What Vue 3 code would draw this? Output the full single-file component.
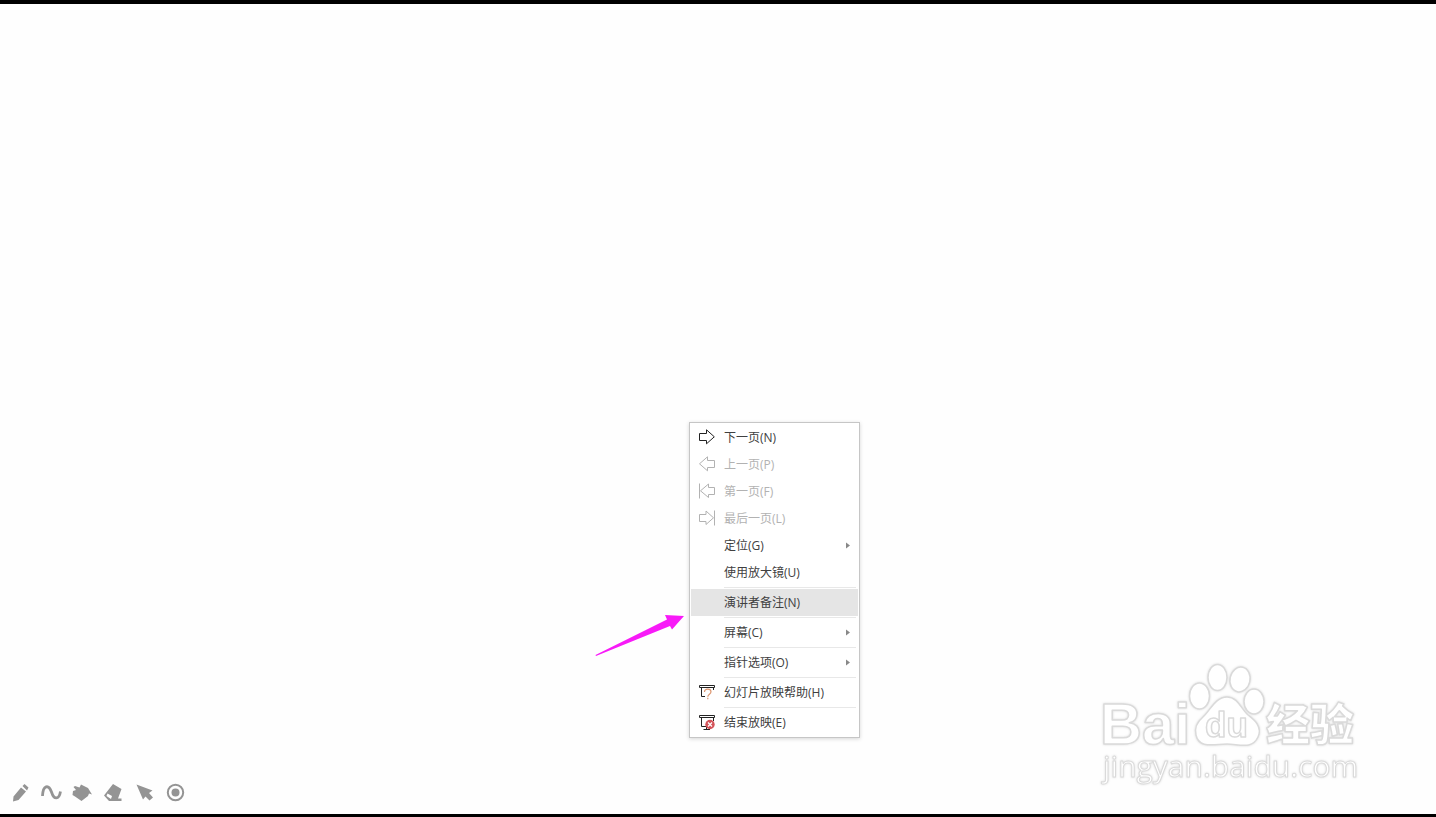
<script setup>
const groups = [
  [
    { label: '下一页(N)', icon: 'next' },
    { label: '上一页(P)', icon: 'prev', disabled: true },
    { label: '第一页(F)', icon: 'first', disabled: true },
    { label: '最后一页(L)', icon: 'last', disabled: true },
    { label: '定位(G)', sub: true },
    { label: '使用放大镜(U)' },
  ],
  [{ label: '演讲者备注(N)', active: true }],
  [{ label: '屏幕(C)', sub: true }],
  [{ label: '指针选项(O)', sub: true }],
  [{ label: '幻灯片放映帮助(H)', icon: 'help' }],
  [{ label: '结束放映(E)', icon: 'end' }],
]
const tools = [
  { name: 'pen', label: '画笔' },
  { name: 'curve', label: '曲线' },
  { name: 'shape', label: '手形' },
  { name: 'eraser', label: '橡皮擦' },
  { name: 'pointer', label: '箭头' },
  { name: 'record', label: '更多' },
]
</script>

<template>
  <main class="show">
    <section class="slide">
      <svg class="callout" viewBox="0 0 90 44" aria-hidden="true">
        <path d="M0.500 41L72 5.500L70 1L89 2L77 15.500L75 12L1 42Z" fill="#f81af8" />
      </svg>

      <div class="menu" role="menu">
        <div v-for="(group, g) in groups" :key="g" class="group" role="group">
          <button
            v-for="item in group"
            :key="item.label"
            class="item"
            :class="{ active: item.active }"
            :disabled="item.disabled"
            role="menuitem"
            type="button"
          >
            <span class="icon">
              <svg v-if="item.icon" width="18" height="18" viewBox="0 0 18 18" fill="none" stroke="currentColor">
                <path v-if="item.icon === 'next'" stroke="#222" d="M1.500 4.500H8.500V0.800L16.300 7.800L8.500 14.800V11.500H1.500Z" />
                <path v-if="item.icon === 'prev'" d="M16.500 4.500H9.500V0.800L1.500 7.800L9.500 14.800V11.500H16.500Z" />
                <path v-if="item.icon === 'first'" d="M1.500 0.500V15.500M16.500 4.500H10.500V1L2.500 7.800L10.500 14.500V11.500H16.500Z" />
                <path v-if="item.icon === 'last'" d="M16.500 0.500V15.500M1.500 4.500H8V1L15.500 7.800L8 14.500V11.500H1.500Z" />
                <template v-if="item.icon === 'help'">
                  <path stroke="#222" d="M1.500 1.500H16.500V3.500H1.500ZM3.500 3.500V12.500H7M15.500 3.500V6" />
                  <path stroke="#dc9670" stroke-width="1.200" d="M6.500 8C6.500 4 13 4.200 13 7.800C13 10.300 9.800 10 9.800 12.700M9.800 13.800V15.300" />
                </template>
                <template v-if="item.icon === 'end'">
                  <path stroke="#222" d="M1.500 1.500H16.500V3.500H1.500ZM3.500 3.500V12.500H8M15.500 3.500V7M5.500 15.500H12M8.500 12.500V15.500" />
                  <circle cx="12" cy="10.500" r="4.700" fill="#d4545a" stroke="none" />
                  <path stroke="#fff" stroke-width="1.200" d="M10 8.500L14 12.500M14 8.500L10 12.500" />
                </template>
              </svg>
            </span>
            <span class="label">{{ item.label }}</span>
            <svg v-if="item.sub" class="more" width="4" height="7" viewBox="0 0 4 7"><path d="M0 0.500L4 3.500L0 6.500Z" fill="#888" /></svg>
          </button>
        </div>
      </div>

      <svg class="watermark" viewBox="0 0 270 134" role="img" aria-label="Baidu 经验">
        <g class="outline">
          <text class="brand" x="4" y="83">Bai</text>
          <ellipse cx="103.500" cy="35" rx="10" ry="13" />
          <ellipse cx="121.500" cy="16.500" rx="9.500" ry="13" />
          <ellipse cx="144" cy="18.500" rx="10" ry="12.500" transform="rotate(12 144 18.500)" />
          <ellipse cx="158" cy="40.500" rx="10" ry="12.500" />
          <path d="M131 36C119 36 114 50 107 56C101 61 98 66 100 74C103 88 118 83 131 83C143 83 156 89 162 76C167 65 157 58 152 54C145 48 142 36 131 36Z" />
          <text class="du" x="109" y="76">du</text>
          <text class="cjk" x="170" y="80">经验</text>
          <text class="site" x="7" y="116">jingyan.baidu.com</text>
        </g>
      </svg>

      <nav class="tools">
        <button v-for="tool in tools" :key="tool.name" class="tool" type="button" :aria-label="tool.label">
          <svg width="22" height="22" viewBox="0 0 22 22" fill="#949494">
            <path v-if="tool.name === 'pen'" d="M3 19.500L3.500 14.500L11 5.500L16 9.500L8.500 18ZM12.500 4L14.500 2L18.500 5.500L17 8.500Z" />
            <path v-if="tool.name === 'curve'" fill="none" stroke="#949494" stroke-width="2.800" d="M1.500 14C2 3 7.500 2 10.500 10C13 18 18 18 19.500 9.500" />
            <path v-if="tool.name === 'shape'" d="M1.500 5L3 4L7.500 5.500L9 2.500L16 6L20 12.500L17 11.500L16 14L9.500 19L3 14.500L0.500 13L1 9L4 8Z" />
            <template v-if="tool.name === 'eraser'">
              <path d="M10 2L18.500 7L15 16.500H18.500V19H6L1 13.500Z" />
              <path fill="#fff" d="M4.500 11.500L9 14L8 17L3.500 14Z" />
            </template>
            <path v-if="tool.name === 'pointer'" d="M2.500 2.500L18.500 8.500L15 11L19 15.500L15.500 18.500L11.500 14.500L9 17.500Z" />
            <template v-if="tool.name === 'record'">
              <circle cx="10.500" cy="10.500" r="7.700" fill="none" stroke="#949494" stroke-width="2" />
              <circle cx="10.500" cy="10.500" r="4" />
            </template>
          </svg>
        </button>
      </nav>
    </section>
  </main>
</template>

<style>
html,
body,
#app {
  height: 100%;
}
body {
  margin: 0;
}
</style>

<style scoped>
.show {
  display: flex;
  min-height: 100%;
  box-sizing: border-box;
  border-top: 4px solid #000;
  border-bottom: 3px solid #000;
  background: #fefefe;
  font-family: "Open Sans", "Noto Sans CJK SC", sans-serif;
}
.slide {
  position: relative;
  display: flex;
  flex: 1;
  align-items: flex-end;
  overflow: hidden;
}
.menu {
  position: absolute;
  left: 689px;
  top: 418px;
  box-sizing: border-box;
  width: 171px;
  padding: 1px;
  border: 1px solid #c6c6c6;
  background: #fff;
  box-shadow: 0 1px 4px rgba(0, 0, 0, 0.16);
}
.group + .group::before {
  content: "";
  display: block;
  height: 1px;
  margin: 1px 2px 1px 33px;
  background: #e8e8e8;
}
.item {
  display: flex;
  align-items: center;
  width: 100%;
  height: 27px;
  padding: 0 8px 0 7px;
  border: 0;
  background: transparent;
  color: #404040;
  font: inherit;
  font-size: 12px;
  line-height: 18px;
  text-align: left;
}
.item:disabled {
  color: #b2b2b2;
}
.item.active {
  background: #e5e5e5;
}
.icon {
  width: 26px;
  height: 18px;
}
.icon svg,
.tool svg {
  display: block;
}
.label {
  flex: 1;
  white-space: nowrap;
}
.callout {
  position: absolute;
  left: 595px;
  top: 610px;
  width: 90px;
  height: 44px;
}
.watermark {
  position: absolute;
  right: 70px;
  bottom: 19px;
  width: 270px;
  height: 134px;
}
.outline {
  fill: #fff;
  stroke: #dadada;
  stroke-width: 1.5px;
  stroke-linejoin: round;
  filter: drop-shadow(0 0 1px #dcdcdc);
}
.brand,
.du {
  font-family: "Liberation Sans", sans-serif;
  font-weight: 700;
}
.brand {
  font-size: 58px;
}
.du {
  font-size: 35px;
}
.cjk {
  font-family: "Noto Sans CJK SC", sans-serif;
  font-weight: 900;
  font-size: 44px;
}
.site {
  font-size: 30px;
  stroke-width: 1px;
}
.tools {
  display: flex;
  gap: 9px;
  padding: 0 0 10px 10px;
}
.tool {
  padding: 0;
  border: 0;
  background: transparent;
}
</style>
